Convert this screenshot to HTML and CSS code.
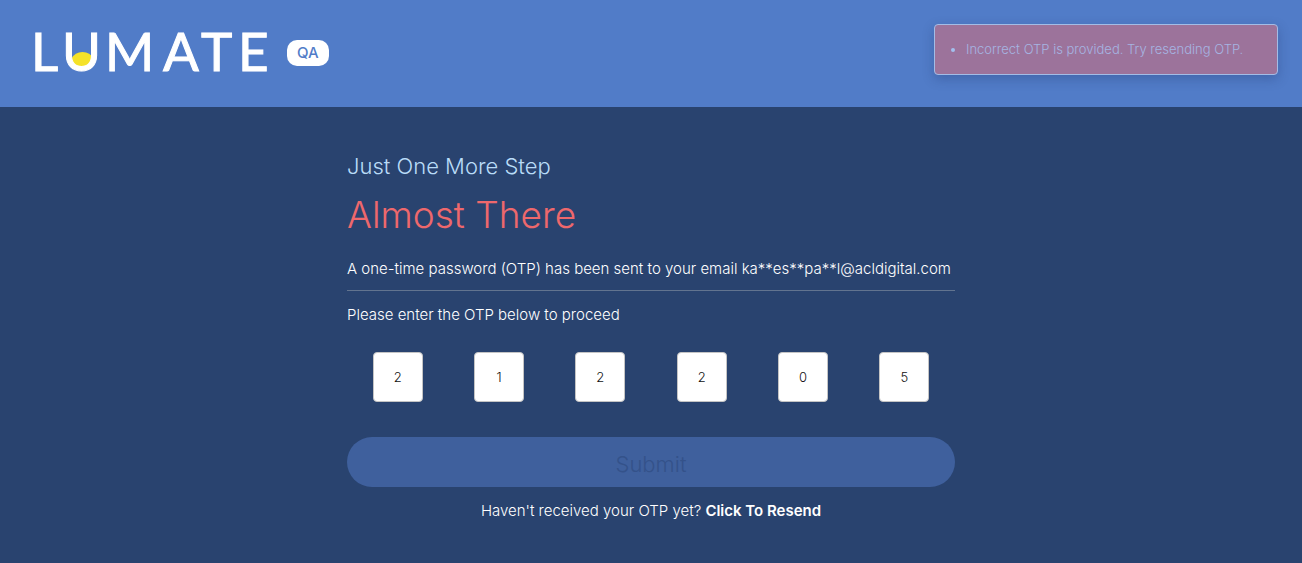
FILE: index.html
```html
<!DOCTYPE html>
<html lang="en">
<head>
<meta charset="utf-8">
<meta name="viewport" content="width=device-width, initial-scale=1">
<title>Lumate – Verify OTP</title>
<link rel="stylesheet" href="styles.css">
</head>
<body>
<header class="topbar">
  <div class="brand">
    <svg class="logo" viewBox="0 0 236 44" role="img" aria-label="Lumate">
      <path class="logo-sun" d="M36 28Q40 21 47.500 21Q55 21 59 28Q56 37 47.500 37Q39 37 36 28Z"/>
      <text class="logo-text" x="-4 27 70 128 166 203" y="40">LUMATE</text>
    </svg>
    <span class="badge">QA</span>
  </div>
  <div class="alert" role="alert">
    <ul class="alert-list">
      <li>Incorrect OTP is provided. Try resending OTP.</li>
    </ul>
  </div>
</header>
<main class="panel">
  <h2 class="subtitle">Just One More Step</h2>
  <h1 class="title">Almost There</h1>
  <p class="notice">A one-time password (OTP) has been sent to your email ka**es**pa**l@acldigital.com</p>
  <form class="otp-form">
    <p class="hint">Please enter the OTP below to proceed</p>
    <div class="digits">
      <input class="digit" type="text" maxlength="1" inputmode="numeric" aria-label="Digit 1" value="2">
      <input class="digit" type="text" maxlength="1" inputmode="numeric" aria-label="Digit 2" value="1">
      <input class="digit" type="text" maxlength="1" inputmode="numeric" aria-label="Digit 3" value="2">
      <input class="digit" type="text" maxlength="1" inputmode="numeric" aria-label="Digit 4" value="2">
      <input class="digit" type="text" maxlength="1" inputmode="numeric" aria-label="Digit 5" value="0">
      <input class="digit" type="text" maxlength="1" inputmode="numeric" aria-label="Digit 6" value="5">
    </div>
    <button class="submit" type="submit" disabled>Submit</button>
  </form>
  <p class="resend">Haven't received your OTP yet? <a class="resend-link" href="#">Click To Resend</a></p>
</main>
</body>
</html>
```
FILE: styles.css
```css
* {
  box-sizing: border-box;
}

body {
  margin: 0;
  background: #29436f;
  color: #fff;
  font-family: Inter, "Open Sans", sans-serif;
  font-size: 15px;
  font-weight: 300;
  line-height: 24px;
}

h1,
h2,
p {
  margin: 0;
  font-weight: 300;
}

.topbar {
  display: flex;
  justify-content: space-between;
  align-items: flex-start;
  min-height: 107px;
  padding: 24px 24px 24px 35px;
  background: #517cc8;
}

.brand {
  display: flex;
  align-items: center;
  gap: 16px;
  padding-top: 7px;
}

.logo {
  display: block;
  width: 236px;
  height: 44px;
  overflow: visible;
}

.logo-sun {
  fill: #f5e229;
}

.logo-text {
  fill: #fff;
  stroke: #fff;
  stroke-width: 1px;
  font-family: Lato, sans-serif;
  font-size: 53px;
  font-weight: 400;
}

.badge {
  padding: 0 10px;
  border-radius: 10px;
  background: #fff;
  color: #517cc8;
  font-weight: 500;
  line-height: 26px;
}

.alert {
  width: 344px;
  padding: 12px 8px;
  border: 1px solid #a3bce6;
  border-radius: 4px;
  background: #9c739b;
  box-shadow: 0 4px 12px rgba(30, 50, 100, 0.3);
  color: #a6b5e2;
  font-size: 13px;
  line-height: 25px;
}

.alert-list {
  margin: 0;
  padding-left: 23px;
}

.alert-list li::marker {
  color: #a3c0ee;
  font-weight: 600;
}

.panel {
  width: 100%;
  max-width: 608px;
  margin: 0 auto;
  padding: 43px 0;
}

.subtitle {
  color: #b9dcf8;
  font-size: 22px;
  line-height: 32px;
}

.title {
  padding-top: 9px;
  color: #ee686c;
  font-size: 37px;
  line-height: 48px;
}

.notice {
  padding: 18px 0 9px;
  border-bottom: 1px solid #62748f;
}

.hint {
  padding-top: 12px;
}

.digits {
  display: flex;
  justify-content: space-around;
  padding: 25px 0 35px;
}

.digit {
  width: 50px;
  height: 50px;
  padding: 0;
  border: 1px solid #c4c4c4;
  border-radius: 4px;
  background: #fff;
  color: #111;
  font: inherit;
  font-size: 13px;
  text-align: center;
}

.submit {
  display: block;
  width: 100%;
  height: 50px;
  padding: 4px 0 0;
  border: 0;
  border-radius: 25px;
  background: #3f609d;
  color: #34528a;
  font: inherit;
  font-size: 22px;
}

.resend {
  padding-top: 12px;
  text-align: center;
}

.resend-link {
  color: #fff;
  font-weight: 600;
  text-decoration: none;
}
```
